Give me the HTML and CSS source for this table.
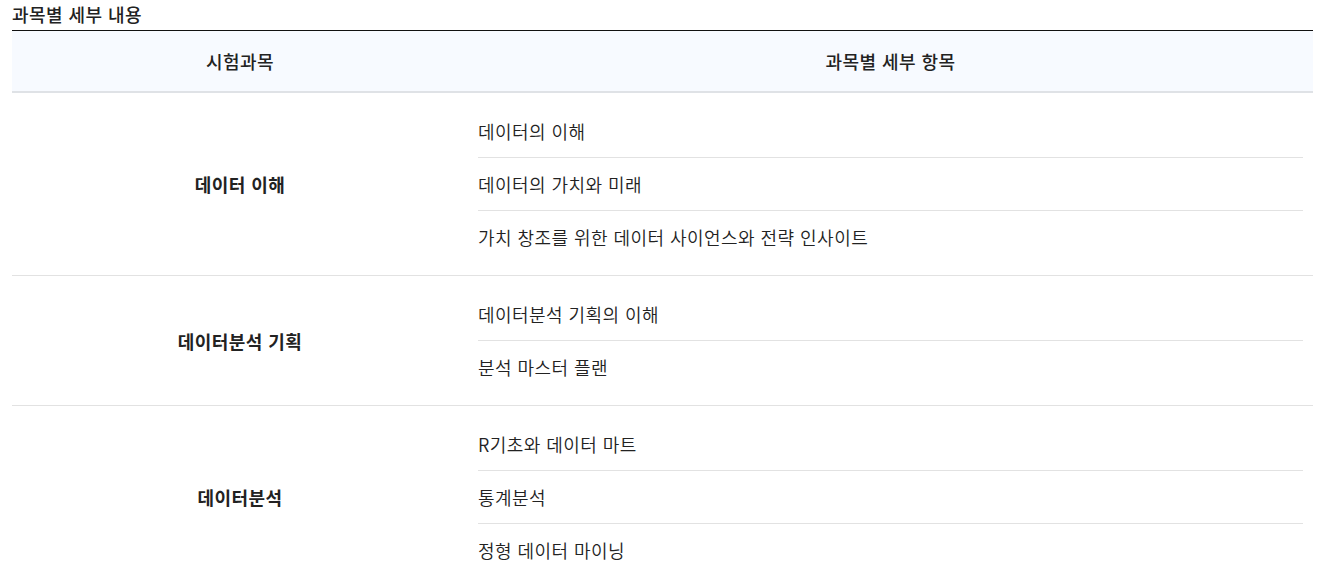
FILE: index.html
```html
<!DOCTYPE html>
<html lang="ko">
<head>
<meta charset="utf-8">
<link rel="stylesheet" href="styles.css">
</head>
<body>
<div class="wrap">
  <h3 class="title">과목별 세부 내용</h3>
  <div class="table">
    <div class="thead">
      <div class="th subj">시험과목</div>
      <div class="th items">과목별 세부 항목</div>
    </div>
    <div class="group">
      <div class="subj name">데이터 이해</div>
      <ul class="list">
        <li>데이터의 이해</li>
        <li>데이터의 가치와 미래</li>
        <li>가치 창조를 위한 데이터 사이언스와 전략 인사이트</li>
      </ul>
    </div>
    <div class="group">
      <div class="subj name">데이터분석 기획</div>
      <ul class="list">
        <li>데이터분석 기획의 이해</li>
        <li>분석 마스터 플랜</li>
      </ul>
    </div>
    <div class="group">
      <div class="subj name">데이터분석</div>
      <ul class="list">
        <li>R기초와 데이터 마트</li>
        <li>통계분석</li>
        <li>정형 데이터 마이닝</li>
      </ul>
    </div>
  </div>
</div>
</body>
</html>
```

FILE: styles.css
```css
* { box-sizing: border-box; }
html, body { margin: 0; padding: 0; background: #fff; }
body {
  font-family: "Noto Sans CJK KR", "Noto Sans", sans-serif;
  color: #333;
  letter-spacing: 0.45px;
}
.wrap {
  margin: 0 5px 0 12px;
}
.title {
  margin: 0;
  height: 30px;
  line-height: 28px;
  font-size: 18px;
  font-weight: 500;
  color: #222;
}
.table {
  border-top: 1px solid #111;
}
.thead {
  display: flex;
  height: 62px;
  background: #f7faff;
  border-bottom: 2px solid #dfe2e6;
}
.th {
  display: flex;
  align-items: center;
  justify-content: center;
  font-size: 18px;
  font-weight: 500;
  color: #222;
}
.subj { width: 456px; flex: none; }
.items { flex: 1; }
.group {
  display: flex;
  border-bottom: 1px solid #e2e2e2;
}
.name {
  display: flex;
  align-items: center;
  justify-content: center;
  font-size: 18px;
  font-weight: 700;
  color: #222;
}
.list {
  flex: 1;
  list-style: none;
  margin: 0;
  padding: 12px 10px;
}
.list li {
  height: 53px;
  display: flex;
  align-items: center;
  font-size: 18px;
  font-weight: 350;
  color: #222;
  border-bottom: 1px solid #e2e2e2;
}
.list li:last-child { border-bottom: 0; height: 52px; }
```
